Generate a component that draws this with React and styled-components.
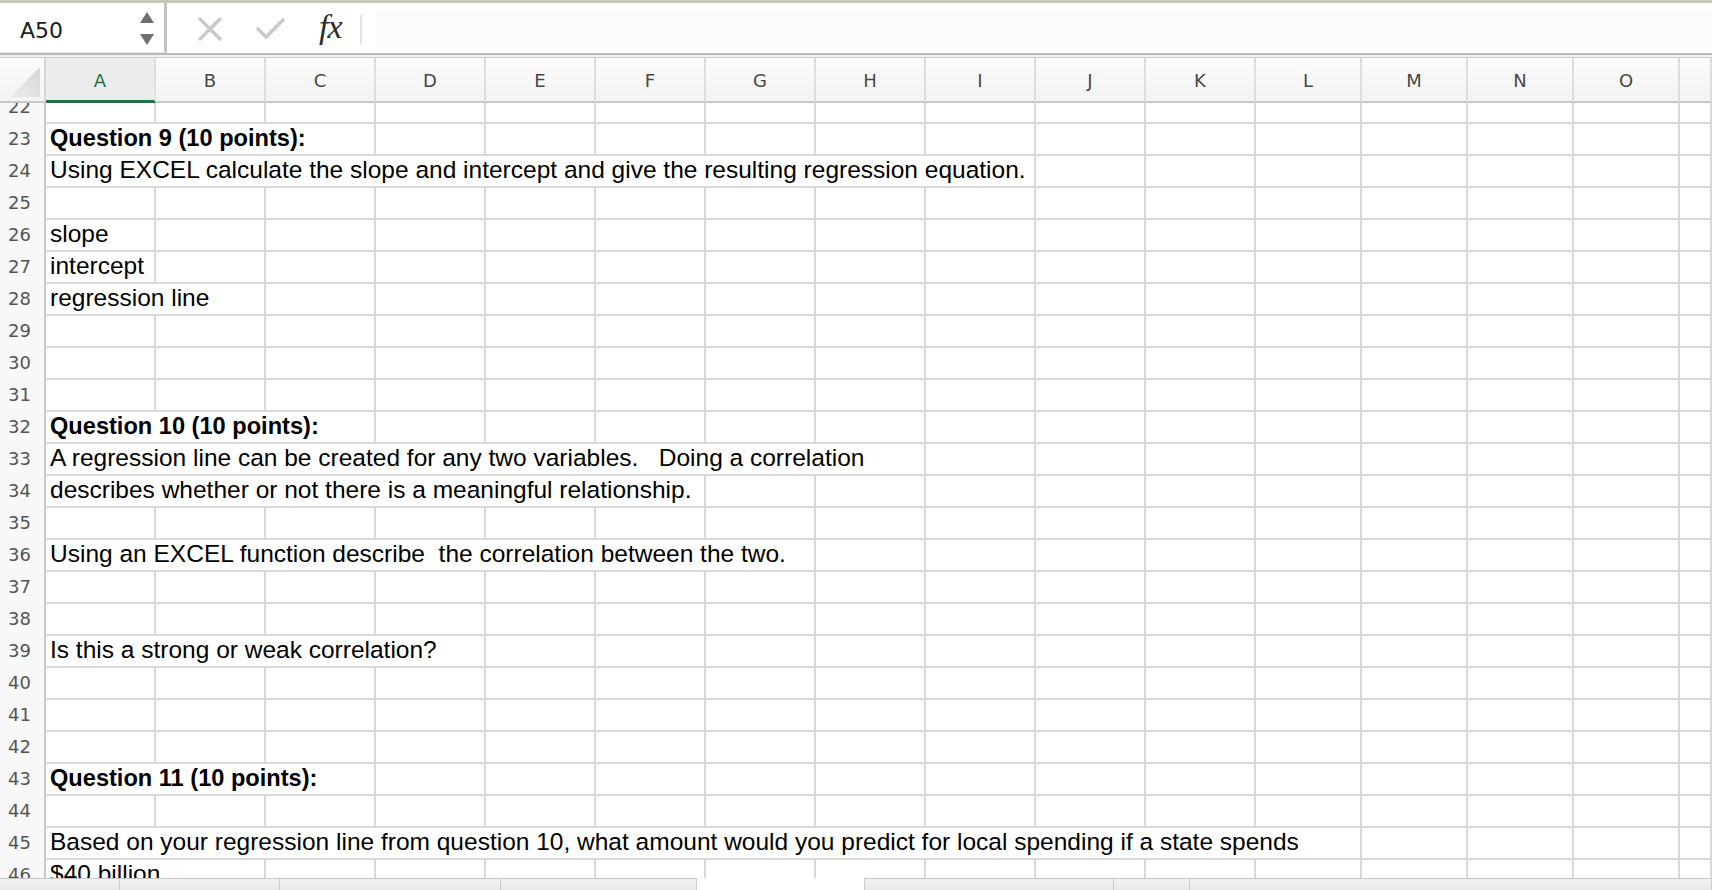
import React from 'react';
import styled, { createGlobalStyle } from 'styled-components';

const GlobalStyle = createGlobalStyle`
  html, body {
    margin: 0;
    padding: 0;
    background: #fff;
    overflow: hidden;
  }
`;

// row header + A..K at 110px, L..O at 106px, then what is left of P
const GRID = '46px repeat(11, 110px) repeat(4, 106px) 1fr';
const LETTERS = 'ABCDEFGHIJKLMNOP'.split('');

const rows = [
  { n: 22 },
  { n: 23, text: 'Question 9 (10 points):', bold: true, span: 3 },
  { n: 24, text: 'Using EXCEL calculate the slope and intercept and give the resulting regression equation.', span: 9 },
  { n: 25 },
  { n: 26, text: 'slope', span: 1 },
  { n: 27, text: 'intercept', span: 1 },
  { n: 28, text: 'regression line', span: 2 },
  { n: 29 },
  { n: 30 },
  { n: 31 },
  { n: 32, text: 'Question 10 (10 points):', bold: true, span: 3 },
  { n: 33, text: 'A regression line can be created for any two variables.   Doing a correlation', span: 8 },
  { n: 34, text: 'describes whether or not there is a meaningful relationship.', span: 6 },
  { n: 35 },
  { n: 36, text: 'Using an EXCEL function describe  the correlation between the two.', span: 7 },
  { n: 37 },
  { n: 38 },
  { n: 39, text: 'Is this a strong or weak correlation?', span: 4 },
  { n: 40 },
  { n: 41 },
  { n: 42 },
  { n: 43, text: 'Question 11 (10 points):', bold: true, span: 3 },
  { n: 44 },
  { n: 45, text: 'Based on your regression line from question 10, what amount would you predict for local spending if a state spends', span: 12 },
  { n: 46, text: '$40 billion', span: 2 },
];

const tabs = [
  { w: 120 },
  { w: 160 },
  { w: 221 },
  { w: 196 },
  { w: 168, active: true },
  { w: 249 },
  { w: 76 },
];

const Window = styled.div`
  width: 1712px;
  height: 890px;
  display: flex;
  flex-direction: column;
  overflow: hidden;
  background: #fff;
`;

const TopStrip = styled.div`
  height: 3px;
  background: #cbc7b6;
  flex: none;
`;

const FormulaBar = styled.div`
  height: 50px;
  display: flex;
  align-items: stretch;
  flex: none;
`;

const NameBox = styled.div`
  width: 167px;
  border-right: 3px solid #c2c2c2;
  border-bottom: 1px solid #e2e2e2;
  display: flex;
  align-items: center;
  justify-content: space-between;
  padding: 0 10px 0 20px;
  box-sizing: border-box;
  font-family: "DejaVu Sans", sans-serif;
  font-size: 22px;
  color: #1c1c1c;
`;

const NameText = styled.span`
  padding-top: 6px;
`;

const Spinner = styled.div`
  display: flex;
  flex-direction: column;
  gap: 11px;
  margin-top: 1px;
`;

const Tools = styled.div`
  display: flex;
  align-items: center;
  padding: 2px 0 0 31px;
`;

const ToolIcon = styled.div`
  width: ${p => p.w}px;
  display: flex;
  align-items: center;
  justify-content: flex-start;
`;

const Fx = styled.span`
  font-family: "Liberation Serif", serif;
  font-style: italic;
  font-size: 34px;
  color: #2e2e2e;
  letter-spacing: -1px;
  margin: -4px 0 0 6px;
`;

const ToolDivider = styled.div`
  width: 2px;
  height: 29px;
  background: #e2e2e2;
  margin-left: 13px;
`;

const FormulaInput = styled.div`
  flex: 1;
  margin: 8px 0 7px 14px;
  background: #fbfbfb;
`;

const Separator = styled.div`
  height: 5px;
  flex: none;
  box-sizing: border-box;
  border-top: 2px solid #b9b9b9;
  border-bottom: 1px solid #cfcfcf;
  background: #efefef;
`;

const HeaderRow = styled.div`
  display: grid;
  grid-template-columns: ${GRID};
  height: 45px;
  flex: none;
  background: linear-gradient(#fbfbfb, #f3f3f3);
`;

const Corner = styled.div`
  box-sizing: border-box;
  border-right: 2px solid #d6d6d6;
  border-bottom: 2px solid #c9c9c9;
  display: flex;
  align-items: flex-start;
  padding: 9px 0 0 10px;
`;

const ColHead = styled.div`
  box-sizing: border-box;
  border-right: 2px solid #dedede;
  border-bottom: ${p => (p.selected ? '3px solid #217346' : '2px solid #c9c9c9')};
  background: ${p => (p.selected ? '#ececec' : 'transparent')};
  display: flex;
  align-items: center;
  justify-content: center;
  padding-top: ${p => (p.selected ? 2 : 1)}px;
  font-family: "DejaVu Sans", sans-serif;
  font-size: 18px;
  color: ${p => (p.selected ? '#217346' : '#474747')};
`;

const Body = styled.div`
  flex: 1;
  overflow: hidden;
  min-height: 0;
`;

const Rows = styled.div`
  margin-top: -13px;
`;

const Row = styled.div`
  display: grid;
  grid-template-columns: ${GRID};
  height: 32px;
`;

const RowNum = styled.div`
  box-sizing: border-box;
  background: #f8f8f8;
  border-right: 2px solid #c9c9c9;
  border-bottom: 2px solid #dcdcdc;
  padding: 2px 0 0 8px;
  line-height: 30px;
  font-family: "DejaVu Sans", sans-serif;
  font-size: 18px;
  color: #555;
`;

const Cell = styled.div`
  box-sizing: border-box;
  border-right: 2px solid #d8d8d8;
  border-bottom: 2px solid #d8d8d8;
  grid-column: span ${p => p.span || 1};
  padding: 1px 0 0 4px;
  line-height: 30px;
  white-space: pre;
  font-family: "Liberation Sans", Arial, sans-serif;
  font-size: ${p => (p.bold ? 23.6 : 24.5)}px;
  font-weight: ${p => (p.bold ? 700 : 400)};
  color: #000;
`;

const TabBar = styled.div`
  height: 12px;
  flex: none;
  display: flex;
  background: #ececec;
`;

const Tab = styled.div`
  box-sizing: border-box;
  border-top: ${p => (p.active ? 'none' : '1px solid #c6c6c6')};
  border-right: 1px solid #cdcdcd;
  background: ${p => (p.active ? '#fff' : 'linear-gradient(#f2f2f2, #e9e9e9)')};
  flex: ${p => (p.w ? 'none' : 1)};
  width: ${p => (p.w ? `${p.w}px` : 'auto')};
`;

function SpinArrows() {
  return (
    <Spinner>
      <svg width="14" height="11" viewBox="0 0 14 11">
        <path d="M7 0 L14 11 L0 11 Z" fill="#6f6f6f" />
      </svg>
      <svg width="14" height="11" viewBox="0 0 14 11">
        <path d="M0 0 L14 0 L7 11 Z" fill="#6f6f6f" />
      </svg>
    </Spinner>
  );
}

function CornerTriangle() {
  return (
    <svg width="30" height="30" viewBox="0 0 30 30">
      <defs>
        <linearGradient id="tri" x1="0" y1="1" x2="1" y2="0">
          <stop offset="0" stopColor="#ececec" />
          <stop offset="1" stopColor="#d6d6d6" />
        </linearGradient>
      </defs>
      <path d="M30 0 L30 30 L0 30 Z" fill="url(#tri)" />
    </svg>
  );
}

function SheetRow({ row }) {
  const used = row.text ? row.span : 0;
  const blanks = LETTERS.length - used;
  return (
    <Row>
      <RowNum>{row.n}</RowNum>
      {row.text && (
        <Cell span={row.span} bold={row.bold}>
          {row.text}
        </Cell>
      )}
      {Array.from({ length: blanks }).map((_, i) => (
        <Cell key={i} />
      ))}
    </Row>
  );
}

export default function App() {
  return (
    <Window>
      <GlobalStyle />
      <TopStrip />
      <FormulaBar>
        <NameBox>
          <NameText>A50</NameText>
          <SpinArrows />
        </NameBox>
        <Tools>
          <ToolIcon w={57}>
            <svg width="24" height="24" viewBox="0 0 24 24">
              <path d="M2 2 L22 22 M22 2 L2 22" stroke="#c9c9c9" strokeWidth="3.4" strokeLinecap="round" />
            </svg>
          </ToolIcon>
          <ToolIcon w={58}>
            <svg width="31" height="24" viewBox="0 0 31 24">
              <path d="M3 12 L11 20 L28 3" stroke="#c9c9c9" strokeWidth="3.6" fill="none" strokeLinecap="round" strokeLinejoin="round" />
            </svg>
          </ToolIcon>
          <ToolIcon w={34}>
            <Fx>fx</Fx>
          </ToolIcon>
          <ToolDivider />
        </Tools>
        <FormulaInput />
      </FormulaBar>
      <Separator />
      <HeaderRow>
        <Corner>
          <CornerTriangle />
        </Corner>
        {LETTERS.map((l, i) => (
          <ColHead key={l} selected={i === 0}>
            {l === 'P' ? '' : l}
          </ColHead>
        ))}
      </HeaderRow>
      <Body>
        <Rows>
          {rows.map(r => (
            <SheetRow key={r.n} row={r} />
          ))}
        </Rows>
      </Body>
      <TabBar>
        {tabs.map((t, i) => (
          <Tab key={i} w={t.w} active={t.active} />
        ))}
        <Tab />
      </TabBar>
    </Window>
  );
}
